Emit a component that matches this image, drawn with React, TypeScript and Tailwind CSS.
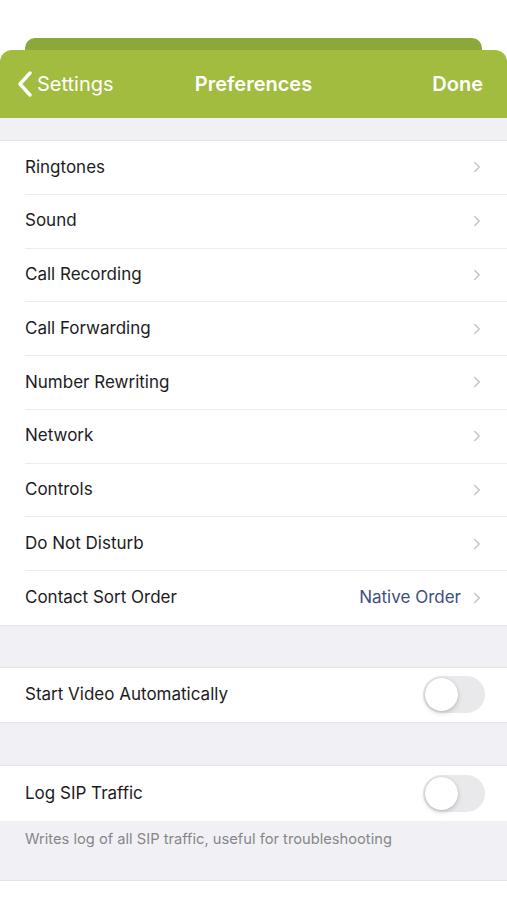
import { ChevronRight } from "lucide-react";

const rows: { label: string; value?: string }[] = [
  { label: "Ringtones" },
  { label: "Sound" },
  { label: "Call Recording" },
  { label: "Call Forwarding" },
  { label: "Number Rewriting" },
  { label: "Network" },
  { label: "Controls" },
  { label: "Do Not Disturb" },
  { label: "Contact Sort Order", value: "Native Order" },
];

function Toggle() {
  return (
    <div className="w-[62px] h-[37px] rounded-full bg-[#e9e9ec] p-[2px] flex items-center">
      <div className="w-[33px] h-[33px] rounded-full bg-white shadow-[0_2px_5px_rgba(0,0,0,0.18),0_0_1px_rgba(0,0,0,0.2)]" />
    </div>
  );
}

export default function App() {
  return (
    <div className="w-[507px] h-[900px] bg-white font-['Inter',sans-serif] text-[#1c1c1e] overflow-hidden">
      <div className="h-[38px]" />
      <div className="mx-[25px] h-[12px] rounded-t-[10px] bg-[#8ca83a]" />
      <div className="h-[68px] rounded-t-[12px] bg-[#a1bc3f] flex items-center justify-between px-[16px] text-white text-[20px]">
        <div className="flex items-center gap-[4px] w-[120px] pl-[1px]">
          <svg width="16" height="26" viewBox="0 0 16 26" fill="none">
            <path d="M13 2 L3 13 L13 24" stroke="white" strokeWidth="3.4" strokeLinecap="round" strokeLinejoin="round" />
          </svg>
          <span>Settings</span>
        </div>
        <span className="font-semibold">Preferences</span>
        <span className="font-semibold w-[120px] text-right pr-[8px]">Done</span>
      </div>

      <div className="bg-[#f1f1f5]">
        <div className="h-[22px]" />
        <div className="bg-white border-t border-b border-[#e5e5ea]">
          {rows.map((r, i) => (
            <div key={r.label} className="pl-[25px]">
              <div
                className={
                  "h-[53.75px] flex items-center pr-[21px] " +
                  (i < rows.length - 1 ? "border-b border-[#ececf0]" : "")
                }
              >
                <span className="text-[17px] flex-1">{r.label}</span>
                {r.value && <span className="text-[17px] text-[#3d4f7d] mr-[7px]">{r.value}</span>}
                <ChevronRight size={18} strokeWidth={2} className="text-[#c5c5c9]" />
              </div>
            </div>
          ))}
        </div>

        <div className="h-[41px]" />
        <div className="bg-white border-t border-b border-[#e5e5ea] h-[56px] flex items-center pl-[25px] pr-[22px]">
          <span className="text-[17px] flex-1">Start Video Automatically</span>
          <Toggle />
        </div>

        <div className="h-[42px]" />
        <div className="bg-white border-t border-[#e5e5ea] h-[56px] flex items-center pl-[25px] pr-[22px]">
          <span className="text-[17px] flex-1">Log SIP Traffic</span>
          <Toggle />
        </div>
        <div className="h-[60px] border-b border-[#e2e2e7] pl-[25px] pt-[7px] text-[14.7px] text-[#86868b]">
          Writes log of all SIP traffic, useful for troubleshooting
        </div>
      </div>
    </div>
  );
}
